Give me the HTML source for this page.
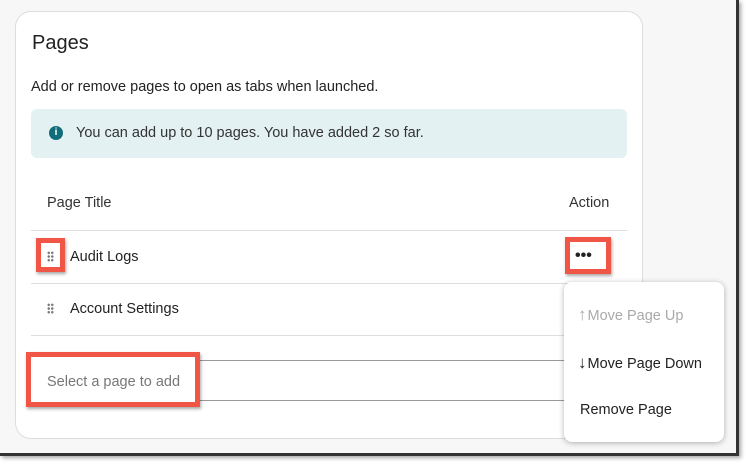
<!DOCTYPE html>
<html><head><style>
*{box-sizing:border-box;margin:0;padding:0}
body{width:746px;height:464px;background:#fff;font-family:"Liberation Sans",sans-serif;color:#222;position:relative;overflow:hidden}
.frame{position:absolute;left:0;top:0;width:739px;height:456px;background:#f7f7f7;border-right:3px solid #333;border-bottom:3px solid #333;box-shadow:2px 2px 4px rgba(0,0,0,.35)}
.card{position:absolute;left:15px;top:11px;width:628px;height:428px;background:#fff;border:1px solid #ddd;border-radius:16px}
.a{position:absolute;white-space:nowrap;font-size:14.5px}
.red{position:absolute;border:5px solid #f05545;box-shadow:1px 2px 3px rgba(0,0,0,.35);background:#fff}
.line{position:absolute;height:1px;background:#ddd}
.grip{position:absolute;width:7px;height:11px;background:radial-gradient(circle,#777 1.1px,transparent 1.4px) 0 0/3.5px 3.7px}
.menu{position:absolute;left:564px;top:282px;width:160px;height:160px;background:#fff;border-radius:8px;box-shadow:0 1px 6px rgba(0,0,0,.3)}
.ar{font-size:17px;margin-right:1px}
</style></head><body>
<div class="frame"></div>
<div class="card"></div>
<div class="a" style="left:32px;top:32px;font-size:20px">Pages</div>
<div class="a" style="left:31px;top:79px">Add or remove pages to open as tabs when launched.</div>
<div class="a" style="left:31px;top:109px;width:596px;height:49px;background:#e3f1f2;border-radius:6px"></div>
<div class="a" style="left:49px;top:126px;width:14px;height:14px;border-radius:50%;background:#0f6e7a;color:#fff;font-size:10px;font-weight:bold;text-align:center;line-height:14px">i</div>
<div class="a" style="left:76px;top:125px;color:#333">You can add up to 10 pages. You have added 2 so far.</div>
<div class="a" style="left:47px;top:195px;color:#333">Page Title</div>
<div class="a" style="left:569px;top:195px;color:#333">Action</div>
<div class="line" style="left:31px;top:230px;width:596px"></div>
<div class="red" style="left:36px;top:238px;width:29px;height:34px"></div>
<div class="grip" style="left:47px;top:251px"></div>
<div class="a" style="left:70px;top:249px">Audit Logs</div>
<div class="red" style="left:565px;top:237px;width:46px;height:37px"></div>
<div class="a" style="left:575px;top:248px;font-size:16px;font-weight:bold;letter-spacing:0px;line-height:16px">•••</div>
<div class="line" style="left:31px;top:283px;width:596px"></div>
<div class="grip" style="left:47px;top:303px"></div>
<div class="a" style="left:70px;top:301px">Account Settings</div>
<div class="line" style="left:31px;top:335px;width:596px"></div>
<div class="line" style="left:31px;top:360px;width:540px;background:#999"></div>
<div class="line" style="left:31px;top:400px;width:540px;background:#999"></div>
<div class="red" style="left:26px;top:352px;width:174px;height:55px"></div>
<div class="a" style="left:47px;top:374px;color:#777">Select a page to add</div>
<div class="menu"></div>
<div class="a" style="left:578px;top:305px;color:#aaa"><span class="ar">↑</span>Move Page Up</div>
<div class="a" style="left:578px;top:353px;color:#222"><span class="ar">↓</span>Move Page Down</div>
<div class="a" style="left:580px;top:402px;color:#222">Remove Page</div>
</body></html>
